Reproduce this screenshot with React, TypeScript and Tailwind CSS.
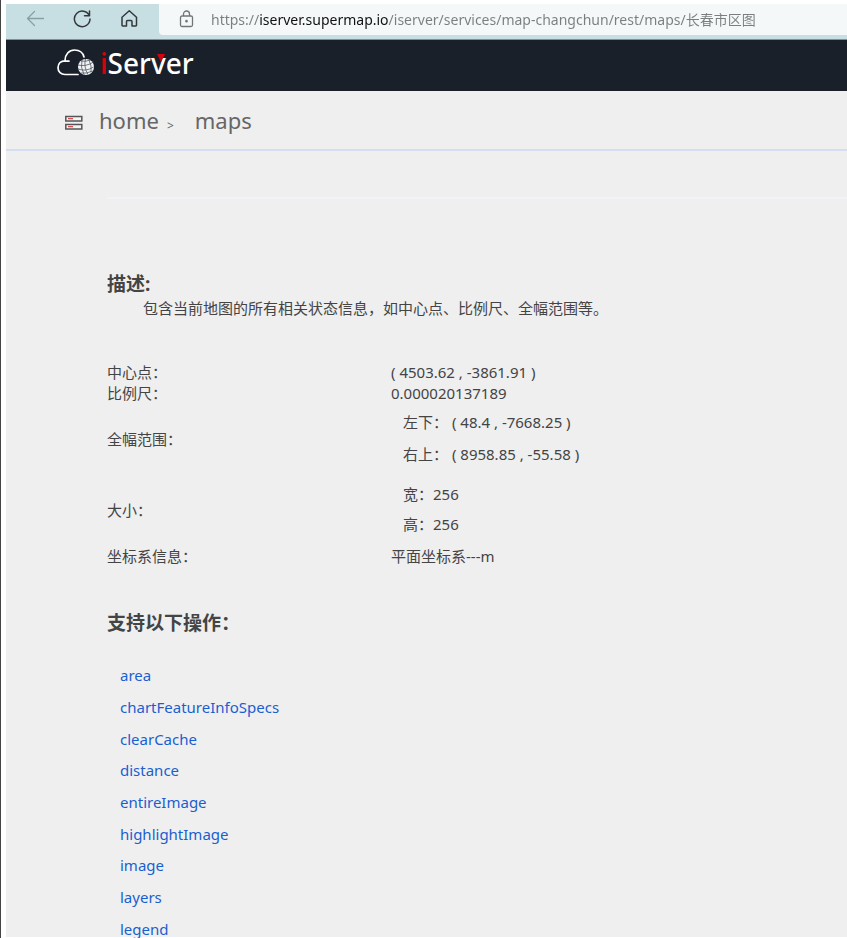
import React from "react";

const operations = [
  "area",
  "chartFeatureInfoSpecs",
  "clearCache",
  "distance",
  "entireImage",
  "highlightImage",
  "image",
  "layers",
  "legend",
];

function BrowserBar() {
  return (
    <div className="flex h-9 items-start bg-[#c7dfe3] border-b border-[#7d9197]">
      <div className="flex w-[153px] shrink-0 items-center gap-[27px] pl-5 pt-1">
        <button type="button" aria-label="Back" className="text-[#8b9ea2]">
          <svg width="20" height="20" viewBox="0 0 20 20" fill="none" stroke="currentColor" strokeWidth="1.3" strokeLinecap="round" strokeLinejoin="round">
            <path d="M17.5 10.5H1.5M8.5 3.5L1.5 10.5L8.5 17.5" />
          </svg>
        </button>
        <button type="button" aria-label="Refresh" className="text-[#33393b]">
          <svg width="20" height="20" viewBox="0 0 20 20" fill="none" stroke="currentColor" strokeWidth="1.5" strokeLinecap="round" strokeLinejoin="round">
            <path d="M16.3 7.600A7.800 7.800 0 1 0 17 11M16.500 3V7.800H11.500" />
          </svg>
        </button>
        <button type="button" aria-label="Home" className="text-[#33393b]">
          <svg width="20" height="20" viewBox="0 0 20 20" fill="none" stroke="currentColor" strokeWidth="1.5" strokeLinejoin="round">
            <path d="M2 9.300L9.300 2.800L16.500 9.300V17.300Q16.500 18 15.800 18H12V13.500Q12 12.500 11 12.500H7.500Q6.500 12.500 6.500 13.500V18H2.700Q2 18 2 17.300Z" />
          </svg>
        </button>
      </div>
      <div className="flex h-[31px] min-w-0 flex-1 items-center rounded-bl-[4px] bg-[#f5f8f9] pl-5">
        <svg className="mr-4 shrink-0 text-[#727577]" width="16" height="20" viewBox="0 0 16 20" fill="none" stroke="currentColor" strokeWidth="1.3">
          <rect x="1.500" y="6" width="12" height="10.500" rx="1.500" />
          <path d="M4.500 6V4a3 3 0 0 1 6 0V6" />
          <circle cx="7.500" cy="11.200" r="0.700" fill="currentColor" />
        </svg>
        <input
          type="text"
          aria-label="Address"
          defaultValue="https://iserver.supermap.io/iserver/services/map-changchun/rest/maps/长春市区图"
          className="min-w-0 flex-1 bg-[linear-gradient(90deg,#7b7d7e_48px,#111_48px,#111_177px,#7b7d7e_177px)] bg-clip-text text-[14px] leading-5 text-transparent caret-black outline-none"
        />
      </div>
    </div>
  );
}

function Logo() {
  return (
    <a href="#" className="flex items-center text-white" aria-label="iServer">
      <svg width="40" height="30" viewBox="0 0 40 30" fill="none">
        <path d="M22 26.500H9C5 26.500 2 23.700 2 19.700C2 15.500 5 12.800 9 12.800L13 13.200M9 12.500C9 6.500 13 2 18.500 2C23.500 2 27 5 28 9" stroke="#fff" strokeWidth="1.700" strokeLinecap="round" strokeLinejoin="round" />
        <circle cx="30" cy="19" r="8" fill="#f1f2f3" />
        <path d="M22 17q8 2 15.500-3M22 21q8 3 15.500-2M24.500 25q6 1 12-2M25 13q5 1 9-1M26 12q-2 7 2 14.500M29.500 11q-2 8 2.500 15.500M33 12q3 6 2 12.500" stroke="#515963" strokeWidth="0.800" />
      </svg>
      <span className="relative ml-1 text-[28px] font-medium leading-[46px]">
        <span className="text-[#d3040c]">i</span>Server
        <svg className="absolute left-[57px] top-[14px]" width="8" height="8" viewBox="0 0 8 8">
          <path d="M0 0H8L4 8Z" fill="#d3040c" />
        </svg>
      </span>
    </a>
  );
}

function Breadcrumb() {
  return (
    <nav className="flex h-[60px] items-center border-b-2 border-[#d3dfef] pl-[59px] text-[22px] text-[#666]">
      <svg className="mr-4 mt-1" width="18" height="15" viewBox="0 0 18 15" fill="#f4f4f4" stroke="#555" strokeWidth="1.5">
        <rect x="0.800" y="1.500" width="16" height="4.500" />
        <rect x="0.800" y="9.500" width="16" height="4.500" />
        <path d="M3 3.700H8M3 11.700H8" stroke="#dc4b56" strokeWidth="1.300" />
      </svg>
      <a href="#">home</a>
      <span className="ml-2 mr-[21px] mt-3 text-[12px]">&gt;</span>
      <a href="#">maps</a>
    </nav>
  );
}

function Row({ label, tall, children }: { label: string; tall?: boolean; children: React.ReactNode }) {
  return (
    <tr className={tall ? "h-[71px]" : "h-[21px]"}>
      <th scope="row" className="w-[284px] p-0 text-left align-middle font-normal">{label}</th>
      <td className="p-0 align-middle">{children}</td>
    </tr>
  );
}

export default function App() {
  return (
    <div className="h-screen overflow-hidden border-l border-[#444] bg-white pl-[5px] pt-1 font-['Noto_Sans','Noto_Sans_CJK_SC',sans-serif] text-[#444]">
      <BrowserBar />
      <header className="flex h-[51px] items-start bg-[#19202a] pl-[50px]">
        <Logo />
      </header>
      <div className="bg-[#efefef]">
        <Breadcrumb />
        <main className="pl-[101px] text-[15px] leading-[21px]">
          <hr className="mt-[46px] border-t-2 border-[#f2f2f7]" />
          <h2 className="mt-[73px] text-[19px] font-bold leading-6">描述:</h2>
          <p className="mt-[2px] pl-9">包含当前地图的所有相关状态信息，如中心点、比例尺、全幅范围等。</p>
          <table className="mt-[43px] w-full border-collapse">
            <tbody>
              <Row label="中心点：">( 4503.62 , -3861.91 )</Row>
              <Row label="比例尺：">0.000020137189</Row>
              <Row label="全幅范围：" tall>
                <div className="pb-1 pl-3 leading-8">
                  <div>左下： ( 48.4 , -7668.25 )</div>
                  <div>右上： ( 8958.85 , -55.58 )</div>
                </div>
              </Row>
              <Row label="大小：" tall>
                <div className="pb-1 pl-3 leading-[30px]">
                  <div>宽：256</div>
                  <div>高：256</div>
                </div>
              </Row>
              <Row label="坐标系信息：">平面坐标系---m</Row>
            </tbody>
          </table>
          <h2 className="mt-11 text-[19px] font-bold leading-6">支持以下操作：</h2>
          <ul className="mt-8 pl-[13px] leading-4 text-[#1a5fd0]">
            {operations.map((name) => (
              <li key={name} className="mb-4 flex nth-[3n]:mb-[15px]">
                <a href={"#" + name}>{name}</a>
              </li>
            ))}
          </ul>
        </main>
      </div>
    </div>
  );
}
